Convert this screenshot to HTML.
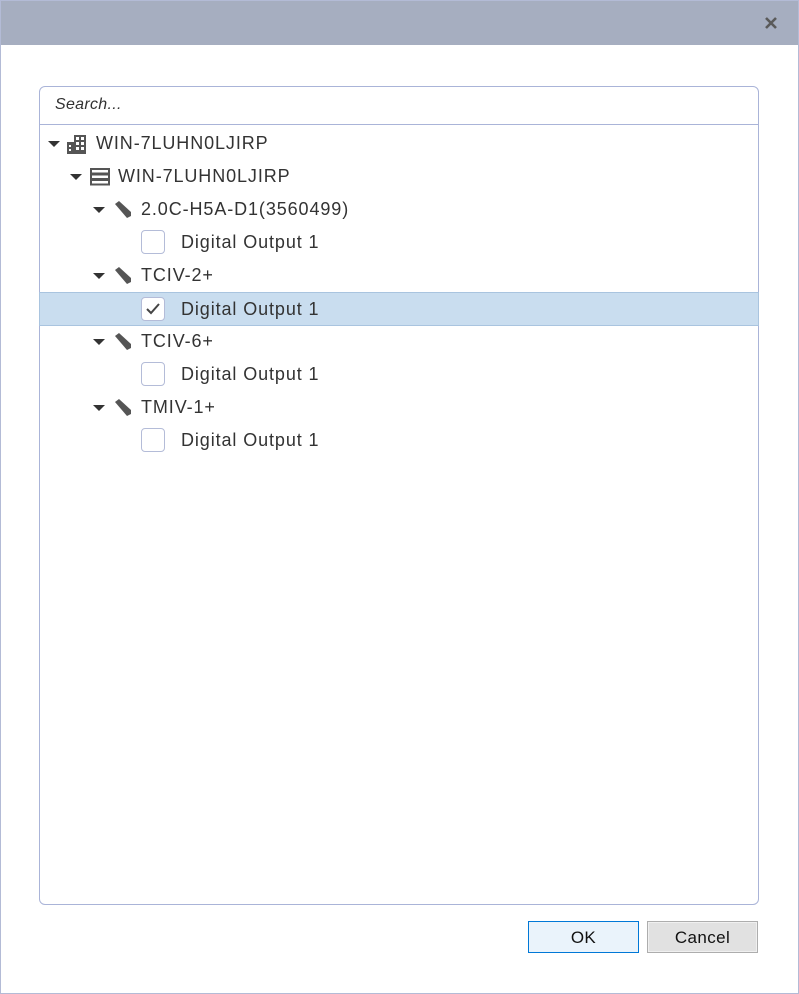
<!DOCTYPE html>
<html><head><style>
body{margin:0;width:799px;height:994px;position:relative;background:#fff;font-family:"Liberation Sans",sans-serif;overflow:hidden}
.frame{position:absolute;left:0;top:0;width:797px;height:992px;border:1px solid #b3bbd6}
.title{position:absolute;left:1px;top:1px;width:797px;height:44px;background:#a6aec0}
.x{position:absolute;left:763px;top:15px}
.panel{position:absolute;left:39px;top:86px;width:718px;height:817px;border:1px solid #aab4d8;border-radius:6px}
.search{position:absolute;left:0;top:0;width:718px;height:37px;border-bottom:1px solid #aab4d8}
.search span{position:absolute;left:15px;top:9px;font-style:italic;font-size:16px;color:#333;letter-spacing:0.3px}
.row{position:absolute;left:0;width:718px;height:33px;font-size:18px;color:#333;letter-spacing:0.9px}
.row .t{position:absolute;top:6px;white-space:nowrap}
.sel{background:#c9ddef;border:1px solid #a9c4df;left:-1px;height:32px}
.arr{position:absolute;top:14px;width:0;height:0;border-left:6px solid transparent;border-right:6px solid transparent;border-top:6px solid #333}
.cb{position:absolute;top:4px;width:22px;height:22px;border:1px solid #b4bcd8;border-radius:4px;background:#fff}
.btn{position:absolute;top:921px;height:32px;font-size:17px;text-align:center;line-height:32px;color:#111;box-sizing:border-box;letter-spacing:0.4px}
</style></head><body>
<div class="frame"></div>
<div class="title"></div>
<svg class="x" width="16" height="16" viewBox="0 0 16 16"><path d="M3 3L13 13M13 3L3 13" stroke="#5a5a5a" stroke-width="2.6"/></svg>
<div class="panel">
<div class="search"><span>Search...</span></div>
<div class="row" style="top:40px"><div class="arr" style="left:8px"></div>
<svg style="position:absolute;left:27px;top:7px" width="20" height="20" viewBox="0 0 20 20"><rect x="0" y="8" width="7" height="12" fill="#555"/><rect x="7" y="1" width="12" height="19" fill="#555"/><g fill="#fff"><rect x="9" y="3" width="3" height="3"/><rect x="14" y="3" width="3" height="3"/><rect x="9" y="8" width="3" height="3"/><rect x="14" y="8" width="3" height="3"/><rect x="9" y="13" width="3" height="3"/><rect x="14" y="13" width="3" height="3"/><rect x="2" y="11" width="2" height="2"/><rect x="2" y="15" width="2" height="2"/></g></svg>
<span class="t" style="left:56px">WIN-7LUHN0LJIRP</span></div>
<div class="row" style="top:73px"><div class="arr" style="left:30px"></div>
<svg style="position:absolute;left:50px;top:8px" width="20" height="18" viewBox="0 0 20 18"><g fill="none" stroke="#555" stroke-width="2"><rect x="1" y="1" width="18" height="4.5"/><rect x="1" y="6.5" width="18" height="4.5"/><rect x="1" y="12" width="18" height="4.5"/></g></svg>
<span class="t" style="left:78px">WIN-7LUHN0LJIRP</span></div>
<div class="row" style="top:106px"><div class="arr" style="left:53px"></div>
<svg style="position:absolute;left:73px;top:8px" width="20" height="18" viewBox="0 0 20 18"><path d="M2 3L6 0L18 11L18 15L14 17Z" fill="#555"/></svg>
<span class="t" style="left:101px">2.0C-H5A-D1(3560499)</span></div>
<div class="row" style="top:139px"><div class="cb" style="left:101px"></div><span class="t" style="left:141px">Digital Output 1</span></div>
<div class="row" style="top:172px"><div class="arr" style="left:53px"></div>
<svg style="position:absolute;left:73px;top:8px" width="20" height="18" viewBox="0 0 20 18"><path d="M2 3L6 0L18 11L18 15L14 17Z" fill="#555"/></svg>
<span class="t" style="left:101px">TCIV-2+</span></div>
<div class="row sel" style="top:205px"><div class="cb" style="left:101px"><svg width="22" height="22" viewBox="0 0 22 22"><path d="M5 11L9 15L17 6" fill="none" stroke="#444" stroke-width="2"/></svg></div><span class="t" style="left:141px">Digital Output 1</span></div>
<div class="row" style="top:238px"><div class="arr" style="left:53px"></div>
<svg style="position:absolute;left:73px;top:8px" width="20" height="18" viewBox="0 0 20 18"><path d="M2 3L6 0L18 11L18 15L14 17Z" fill="#555"/></svg>
<span class="t" style="left:101px">TCIV-6+</span></div>
<div class="row" style="top:271px"><div class="cb" style="left:101px"></div><span class="t" style="left:141px">Digital Output 1</span></div>
<div class="row" style="top:304px"><div class="arr" style="left:53px"></div>
<svg style="position:absolute;left:73px;top:8px" width="20" height="18" viewBox="0 0 20 18"><path d="M2 3L6 0L18 11L18 15L14 17Z" fill="#555"/></svg>
<span class="t" style="left:101px">TMIV-1+</span></div>
<div class="row" style="top:337px"><div class="cb" style="left:101px"></div><span class="t" style="left:141px">Digital Output 1</span></div>
</div>
<div class="btn" style="left:528px;width:111px;border:1px solid #0078d7;background:#eaf3fb">OK</div>
<div class="btn" style="left:647px;width:111px;border:1px solid #adadad;background:#e1e1e1;box-shadow:inset 0 0 0 1px #f0f0f0">Cancel</div>
</body></html>
